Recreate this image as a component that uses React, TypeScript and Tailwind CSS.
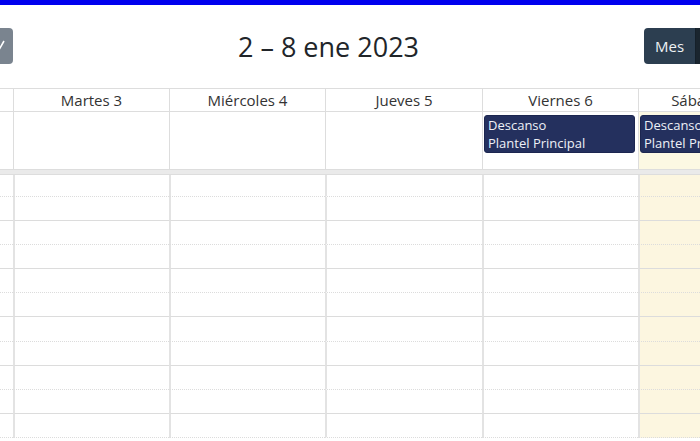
const cols = ['', 'Martes 3', 'Miércoles 4', 'Jueves 5', 'Viernes 6', 'Sábado 7'];
const grid = 'grid grid-cols-[13px_156px_156px_157px_156px_130px]';
const TODAY = 5;

// first slot is cut by the scroll position, then rows alternate dotted / solid
const slots = Array.from({ length: 11 }, (_, i) => ({
  first: i === 0,
  dotted: i % 2 === 0,
}));

function EventChip() {
  return (
    <div className="ml-[1px] mr-[3px] mt-[3px] h-[38px] rounded-[3px] bg-[#24305e] border border-[#1c2650] px-[3px] text-[13px] leading-[18px] text-[#eef0f6] whitespace-nowrap overflow-hidden">
      <div>Descanso</div>
      <div>Plantel Principal</div>
    </div>
  );
}

export default function App() {
  return (
    <div className="w-[700px] h-[441px] overflow-hidden bg-white font-['Open_Sans',sans-serif]">
      <div className="h-[5px] bg-[#0000ee]" />

      {/* toolbar */}
      <div className="mt-[23px] flex items-center h-[36px]">
        <button className="w-[13px] h-[36px] bg-[#7a848f] rounded-r-[4px] relative overflow-hidden">
          <svg width="13" height="36" viewBox="0 0 13 36" className="absolute left-0 top-0">
            <polyline points="-4,14 0,20 4,13" fill="none" stroke="#fff" strokeWidth="1.6" />
          </svg>
        </button>
        <h2 className="flex-1 text-center text-[27px] text-[#212529] leading-none">2 – 8 ene 2023</h2>
        <div className="w-[56px] flex whitespace-nowrap">
          <button className="h-[36px] px-[11px] bg-[#2c3e50] text-[15px] text-[#eef1f4] rounded-l-[4px]">Mes</button>
          <button className="h-[36px] px-[11px] bg-[#1a252f] text-[15px] text-white border-l border-[#15202a]">Semana</button>
        </div>
      </div>

      {/* calendar */}
      <div className="mt-[24px] w-[768px] text-[#333]">
        <div className={`${grid} border-y border-[#ddd]`}>
          {cols.map((c, i) => (
            <div
              key={i}
              className={`h-[22px] flex items-center justify-center whitespace-nowrap text-[15px] ${i > 0 ? 'border-l border-[#ddd]' : ''}`}
            >
              {c}
            </div>
          ))}
        </div>

        <div className={grid}>
          {cols.map((_, i) => (
            <div
              key={i}
              className={`h-[57px] ${i > 0 ? 'border-l border-[#ddd]' : ''} ${i === TODAY ? 'bg-[#fcf8e3]' : ''}`}
            >
              {i >= 4 && <EventChip />}
            </div>
          ))}
        </div>

        <div className="h-[6px] bg-[#eaeaea] border-y border-[#ddd]" />

        {slots.map((s, r) => (
          <div key={r} className={grid}>
            {cols.map((_, i) => (
              <div
                key={i}
                className={`${s.first ? 'h-[21.5px]' : 'h-[24.2px]'} border-b border-solid border-b-[#dcdcdc] ${s.dotted ? '[border-bottom-style:dotted]' : ''} ${i > 0 ? 'border-l-2 border-l-[#e3e3e3]' : ''} ${i === TODAY ? 'bg-[#fcf6e0]' : ''}`}
              />
            ))}
          </div>
        ))}
      </div>
    </div>
  );
}
